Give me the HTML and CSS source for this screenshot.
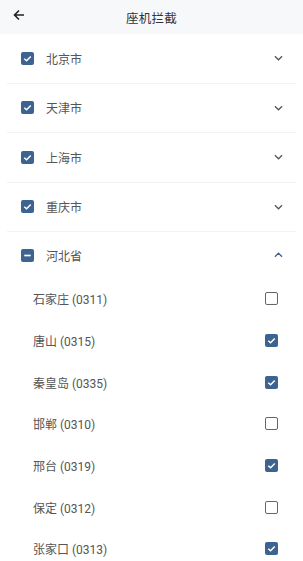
FILE: index.html
```html
<html>
  <head>
    <meta charset="UTF-8" />
    <meta name="viewport" content="width=device-width, initial-scale=1" />
    <link rel="stylesheet" href="styles.css">
  </head>
  <body>
    <div class="header">
      <span class="back">
        <svg width="12" height="12" viewBox="0 0 12 12"><path d="M11 6H1.5M6 1.5L1.5 6L6 10.5" fill="none" stroke="#222" stroke-width="1.6"/></svg>
      </span>
      <div class="title">座机拦截</div>
    </div>

    <div class="list">
      <div class="province">
        <span class="box checked"><svg viewBox="0 0 14 14"><path d="M3.5 7.2L6 9.5L10.5 4.8" fill="none" stroke="#fff" stroke-width="1.6"/></svg></span>
        <span class="name">北京市</span>
        <svg class="chev" viewBox="0 0 10 6"><path d="M1 1L5 5L9 1" fill="none" stroke="#555" stroke-width="1.4"/></svg>
      </div>
      <div class="province">
        <span class="box checked"><svg viewBox="0 0 14 14"><path d="M3.5 7.2L6 9.5L10.5 4.8" fill="none" stroke="#fff" stroke-width="1.6"/></svg></span>
        <span class="name">天津市</span>
        <svg class="chev" viewBox="0 0 10 6"><path d="M1 1L5 5L9 1" fill="none" stroke="#555" stroke-width="1.4"/></svg>
      </div>
      <div class="province">
        <span class="box checked"><svg viewBox="0 0 14 14"><path d="M3.5 7.2L6 9.5L10.5 4.8" fill="none" stroke="#fff" stroke-width="1.6"/></svg></span>
        <span class="name">上海市</span>
        <svg class="chev" viewBox="0 0 10 6"><path d="M1 1L5 5L9 1" fill="none" stroke="#555" stroke-width="1.4"/></svg>
      </div>
      <div class="province">
        <span class="box checked"><svg viewBox="0 0 14 14"><path d="M3.5 7.2L6 9.5L10.5 4.8" fill="none" stroke="#fff" stroke-width="1.6"/></svg></span>
        <span class="name">重庆市</span>
        <svg class="chev" viewBox="0 0 10 6"><path d="M1 1L5 5L9 1" fill="none" stroke="#555" stroke-width="1.4"/></svg>
      </div>
      <div class="province open">
        <span class="box checked"><svg viewBox="0 0 14 14"><path d="M3.5 7H10.5" fill="none" stroke="#fff" stroke-width="1.8"/></svg></span>
        <span class="name">河北省</span>
        <svg class="chev" viewBox="0 0 10 6"><path d="M1 5L5 1L9 5" fill="none" stroke="#3f5f85" stroke-width="1.4"/></svg>
      </div>

      <div class="cities">
        <div class="city"><span class="name">石家庄 (0311)</span><span class="box"></span></div>
        <div class="city"><span class="name">唐山 (0315)</span><span class="box checked"><svg viewBox="0 0 14 14"><path d="M3.5 7.2L6 9.5L10.5 4.8" fill="none" stroke="#fff" stroke-width="1.6"/></svg></span></div>
        <div class="city"><span class="name">秦皇岛 (0335)</span><span class="box checked"><svg viewBox="0 0 14 14"><path d="M3.5 7.2L6 9.5L10.5 4.8" fill="none" stroke="#fff" stroke-width="1.6"/></svg></span></div>
        <div class="city"><span class="name">邯郸 (0310)</span><span class="box"></span></div>
        <div class="city"><span class="name">邢台 (0319)</span><span class="box checked"><svg viewBox="0 0 14 14"><path d="M3.5 7.2L6 9.5L10.5 4.8" fill="none" stroke="#fff" stroke-width="1.6"/></svg></span></div>
        <div class="city"><span class="name">保定 (0312)</span><span class="box"></span></div>
        <div class="city"><span class="name">张家口 (0313)</span><span class="box checked"><svg viewBox="0 0 14 14"><path d="M3.5 7.2L6 9.5L10.5 4.8" fill="none" stroke="#fff" stroke-width="1.6"/></svg></span></div>
      </div>
    </div>
  </body>
</html>
```

FILE: styles.css
```css
body, html {
  margin: 0;
  padding: 0;
  background: #fff;
  font-family: Roboto, "Noto Sans CJK SC", sans-serif;
  color: #555;
}

.header {
  height: 34px;
  background: #f7f8fa;
  display: flex;
  align-items: center;
  justify-content: center;
  position: relative;
}

.back {
  position: absolute;
  left: 13px;
  top: 9px;
  display: flex;
}

.title {
  font-size: 12.5px;
  color: #333;
  letter-spacing: 0.3px;
}

.list {
  padding: 0 7px;
}

.province {
  height: 48.5px;
  display: flex;
  align-items: center;
  padding: 0 13px 0 14px;
  border-bottom: 1px solid #f2f3f5;
}

.province.open {
  border-bottom: none;
  height: 46px;
}

.province .name {
  margin-left: 12px;
  font-size: 12px;
  flex: 1;
}

.chev {
  width: 9px;
  height: 6px;
}

.box {
  width: 13px;
  height: 13px;
  box-sizing: border-box;
  border: 1.5px solid #666;
  border-radius: 2px;
  display: flex;
}

.box.checked {
  background: #3d6390;
  border: none;
}

.box svg {
  width: 13px;
  height: 13px;
}

.city {
  height: 41.67px;
  display: flex;
  align-items: center;
  justify-content: space-between;
  padding: 0 18px 0 26px;
}

.city .name {
  font-size: 12px;
}
```
